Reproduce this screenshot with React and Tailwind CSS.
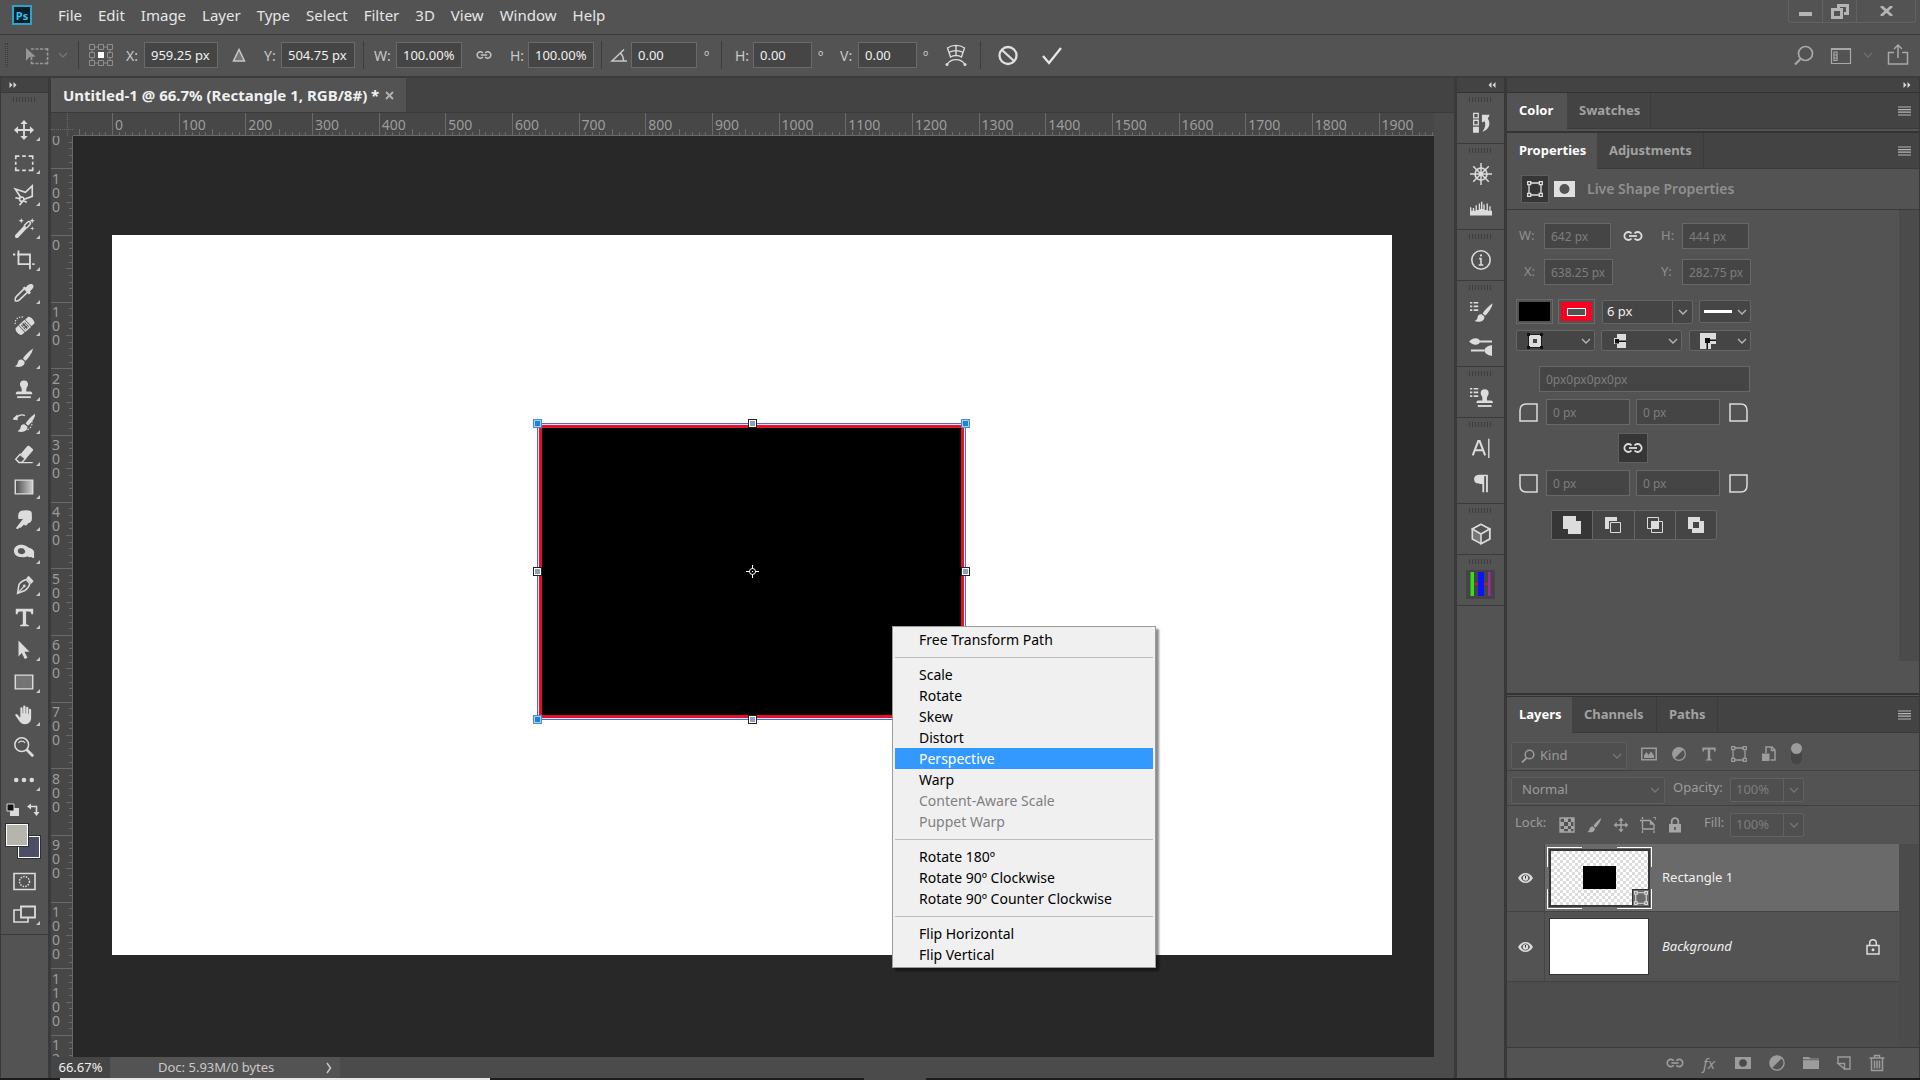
import React from "react";

const FONT = "font-['Noto_Sans','Open_Sans',sans-serif]";

/* ---------- icon helper ---------- */

function Ico({ size = "size-6", box = "0 0 24 24", className = "", children }) {
  return (
    <svg viewBox={box} className={`${size} shrink-0 ${className}`} fill="none" stroke="currentColor" strokeWidth="1.5" aria-hidden="true">
      {children}
    </svg>
  );
}

const fill = { fill: "currentColor", stroke: "none" };

const Chevron = ({ className = "" }) => (
  <Ico size="size-3" box="0 0 12 12" className={className}>
    <path d="M2 4l4 4 4-4" strokeWidth="1.3" />
  </Ico>
);

const LinkIcon = ({ className = "", size = "w-5 h-3" }) => (
  <Ico size={size} box="0 0 20 12" className={className}>
    <path d="M8.500 8.500A4 4 0 1 1 8.500 3.500M11.500 3.500A4 4 0 1 1 11.500 8.500" strokeWidth="1.8" />
    <path d="M6 6h8" strokeWidth="1.8" />
  </Ico>
);

const Burger = () => (
  <button type="button" aria-label="Panel menu" className="ml-auto mr-2 text-[#b5b5b5]">
    <Ico size="w-[13px] h-[10px]" box="0 0 13 10">
      <path d="M0 1h13M0 3.600h13M0 6.200h13M0 9h13" strokeWidth="1.200" />
    </Ico>
  </button>
);

const Arrows = ({ left }) => (
  <Ico size="w-[8px] h-[6px]" box="0 0 8 6" className="text-[#d6d6d6]">
    {left ? <path d="M3.500 0v6L.5 3zM7.500 0v6l-3-3z" {...fill} /> : <path d="M.5 0v6l3-3zM4.500 0v6l3-3z" {...fill} />}
  </Ico>
);

/* ---------- tool drawings ---------- */

const brushShape = (
  <g {...fill}>
    <path d="M22 1.500C17 4.500 13 9 10.800 12.600l2.800 2.600C17 12 20.500 7 22 1.500z" />
    <path d="M9.700 13.600c-2.700-.3-4 1.200-4.400 3.200-.3 1.700-1.300 3.300-3.300 4.200 3.600 1.600 8.300.9 10-1.800 1-1.700.8-2.800.3-3.600z" />
  </g>
);

const stampShape = (
  <g {...fill}>
    <path d="M12 1.500a4.400 4.400 0 0 1 4.400 4.400c0 2-1.900 3.100-1.900 5.600v2.200h4.300c1.700 0 2.200 1.300 2.200 2.800H3c0-1.500.5-2.800 2.200-2.800h4.300v-2.200c0-2.500-1.900-3.600-1.900-5.600A4.400 4.400 0 0 1 12 1.500z" />
    <path d="M4.500 18.800h15v2h-15z" />
  </g>
);

const handShape = (
  <path
    {...fill}
    d="M8 12V4.500a1.300 1.300 0 0 1 2.500 0V10h.6V2.800a1.300 1.300 0 0 1 2.600 0V10h.6V4a1.300 1.300 0 0 1 2.500 0v7h.6V6.500a1.200 1.200 0 0 1 2.400 0V15c0 4-2.400 7-6.600 7-3 0-4.800-1.200-6.200-3.300L2.600 12.600c-.5-1.600 1.300-2.300 2.300-1.100L8 15z"
  />
);

const TOOLS = [
  ["Move", <path {...fill} key="p" d="M12 1l4 4.500h-3V11h5.500V8L23 12l-4.500 4v-3H13v5.500h3L12 23l-4-4.500h3V13H5.500v3L1 12l4.500-4v3H11V5.500H8z" />],
  ["Rectangular Marquee", <path key="p" d="M3 8V4.500h4M10 4.500h4M17 4.500h4.500V8M21.500 10.500v3.500M21.500 16.500v3.500H17M14 20h-4M7 20H3v-3.500M3 14v-3.500" strokeWidth="1.800" />],
  ["Polygonal Lasso", <g key="p"><path d="M9 15.500L2.500 5.500 13.500 9 21 2v11.500L11.500 17" strokeWidth="1.800" /><circle cx="9.500" cy="16.500" r="2.300" strokeWidth="1.600" /><path d="M2.500 15l5 1M11 18.500L7 23M12 18.500l3 1.500" strokeWidth="1.800" /></g>],
  ["Magic Wand", <g key="p"><path {...fill} d="M2.500 19.500L12.500 9l3 3L5.500 22.500c-2 1.500-4.500-1-3-3z" /><path d="M12 9.500l4-4c2-1.500 4 .8 2.500 2.700L15 12" strokeWidth="1.700" /><path {...fill} d="M9 1l.8 2.200L12 4l-2.200.8L9 7l-.8-2.200L6 4l2.200-.8zM21 1l.8 2.200L24 4l-2.200.8L21 7l-.8-2.200L18 4l2.200-.8zM21 10l.6 1.900 1.900.6-1.900.6L21 15l-.6-1.900-1.900-.6 1.900-.6z" /></g>],
  ["Crop", <path key="p" d="M0 6h2.500M4.500 6h14v16M6 2v14.500h13M21 16.500h2.500M6 1.500V6" strokeWidth="2" />],
  ["Eyedropper", <g key="p"><path d="M12 7.500L3.500 16c-1 1-1.500 2.500-1 4.500 2 .5 3.500 0 4.500-1l9-8.500" strokeWidth="1.700" /><path {...fill} d="M10.500 6.500l2-1.500 1.300 1C15 4.500 17 2.500 19 2.200c2.500-.5 4.200 1.800 3 4-.8 1.500-2.500 2.800-3.500 4l1 1.500-2 2z" /></g>],
  ["Spot Healing Brush", <g key="p"><g transform="rotate(-42 13 13)"><path {...fill} d="M4.500 8H8v10H4.500C1 18 1 8 4.500 8zM18 8h4c3 0 3 10 0 10h-4z" /><path d="M9.500 8.500h7v9h-7z" strokeWidth="1.500" /><path d="M11.500 9v8M14.500 9v8" strokeWidth="1.300" strokeDasharray="2 1" /></g><path d="M2.500 11C1.500 6 6 2 11.500 3.500" strokeWidth="1.300" strokeDasharray="1.500 1.500" /></g>],
  ["Brush", brushShape],
  ["Clone Stamp", stampShape],
  ["History Brush", <g key="p"><g transform="translate(3 1)">{brushShape}</g><path {...fill} d="M-1 9L5 3.500V10z" /><path d="M3.500 7.500C6 4.500 10 3.500 13 5" strokeWidth="1.600" /><path d="M20.500 11c1 4-1 8-5 9.500" strokeWidth="1.300" strokeDasharray="1.500 1.800" /></g>],
  ["Eraser", <g key="p"><path {...fill} d="M8.500 10.500L15.500 2.500c.8-.8 1.500-.8 2.300-.2l3.500 3c.8.800.8 1.500.1 2.300L14 16z" /><path d="M7.800 11.300L3 16.500l3.500 3.700h3l4-4.200zM7 20.300h14.500" strokeWidth="1.600" /></g>],
  ["Gradient", <g key="p"><defs><linearGradient id="toolGrad"><stop offset="0" stopColor="#4a4a4a" /><stop offset="1" stopColor="#d0d0d0" /></linearGradient></defs><path d="M2.500 4.500h19v15h-19z" fill="url(#toolGrad)" strokeWidth="1.600" /></g>],
  ["Smudge", <path key="p" {...fill} d="M6 11c-1-4 0-8 3-9 4-1 8-.8 10.500.5 1.500.9 1 5 1.200 7.500 0 3-1.500 5-4.200 5.500-1.500 3-3.500 3-4.500 1.500L9 20c-.6 1-1.800 1-2 0l-1 1.300c-1 1.200-3 .2-2.300-1.200L11 10.500c-1.500.5-3.500.5-5 .5z" />],
  ["Sponge", <path key="p" {...fill} fillRule="evenodd" d="M1 10.500c0-3.500 3-6.500 8-6.500 4.500 0 6.500 2.500 9.500 3.700 2.500 1 4.500 2.300 4.500 4.300v6.500c-1.500.5-2.500-1.500-4-1-2 .8-2-.5-3.500-.5-2 .8-4 1-6.500.5C4 17 1 14.500 1 10.500zM7.500 8C4.500 9 4.500 13 7.500 14s5-.5 6-2c-.5-2-1.500-3.500-3-4-1-.3-2-.3-3 0z" />],
  ["Pen", <g key="p"><path d="M5 21l1.500-9.500C8 9 11.500 7 14.500 6l4 4.500c-1 3-3 6-5.500 7.500z" strokeWidth="1.700" /><path d="M5 21l6.500-7" strokeWidth="1.300" /><circle cx="12.300" cy="13" r="1.500" {...fill} /><path {...fill} d="M14.500 4.500L17 2l5.500 5.500-2.500 3z" /></g>],
  ["Type", <path key="p" {...fill} d="M3 3h19v6h-2c-.2-2.200-.8-3-3-3h-2.700v13c0 1.200.6 1.500 2.900 1.600V22H7.800v-1.400c2.300-.1 2.900-.4 2.900-1.600V6H8C5.800 6 5.200 6.800 5 9H3z" />],
  ["Path Selection", <path key="p" {...fill} d="M6 1.500l12 12.500h-5.500l3.300 6.500-3 1.400-3.200-6.700L6 19z" />],
  ["Rectangle", <path key="p" d="M2.500 4.500h19v15h-19z" fill="#747474" strokeWidth="1.600" />],
  ["Hand", handShape],
  ["Zoom", <g key="p"><circle cx="9.500" cy="9.500" r="7.500" strokeWidth="1.700" /><path d="M6 7.500C7.500 5 11.500 5 13 7.500" strokeWidth="1.300" /><path d="M15 15l7 7" strokeWidth="3" /></g>],
  ["Edit Toolbar", <g key="p" {...fill}><circle cx="3.500" cy="12" r="2.500" /><circle cx="12" cy="12" r="2.500" /><circle cx="20.500" cy="12" r="2.500" /></g>],
];

const Corner = () => <span className="absolute right-2 bottom-[5px] border-l-4 border-b-4 border-l-transparent border-b-[#c8c8c8]" />;

function Grip({ className = "" }) {
  return (
    <svg viewBox="0 0 24 5" className={`w-6 h-[5px] text-[#3d3d3d] ${className}`} stroke="currentColor" aria-hidden="true">
      <path d="M.5 0v5M3.500 0v5M6.500 0v5M9.500 0v5M12.500 0v5M15.500 0v5M18.500 0v5M21.500 0v5" />
    </svg>
  );
}

function Toolbar() {
  return (
    <nav aria-label="Tools" className="flex w-12 shrink-0 flex-col border-l border-[#3a3a3a] bg-[#535353] text-[#dcdcdc]">
      <div className="flex h-[15px] items-center border-b border-[#3a3a3a] bg-[#434343] pl-2">
        <Arrows />
      </div>
      <div className="flex h-[21px] shrink-0 justify-center pt-1">
        <Grip />
      </div>
      <div className="flex h-[682px] shrink-0 flex-col">
        {TOOLS.map(([name, art]) => (
          <button key={name} type="button" aria-label={name} className="relative flex w-full flex-1 items-center pl-3">
            <Ico size="size-[22px]">{art}</Ico>
            {name !== "Zoom" && <Corner />}
          </button>
        ))}
      </div>
      <div className="flex h-[27px] items-center justify-between pr-2 pl-[5px]">
        <button type="button" aria-label="Default colors">
          <Ico size="size-[13px]" box="0 0 13 13">
            <path d="M5 5h8v8H4V9" {...fill} />
            <path d="M1 1h7v7H1z" fill="#111" strokeWidth="1" />
          </Ico>
        </button>
        <button type="button" aria-label="Swap colors">
          <Ico size="size-[13px]" box="0 0 13 13">
            <path d="M3 3.500h6.500V10" strokeWidth="1.600" />
            <path d="M4 .5v6l-4-3zM6.500 9h6l-3 4z" {...fill} />
          </Ico>
        </button>
      </div>
      <div className="ml-1 grid h-9 w-[36px]">
        <button type="button" aria-label="Background color" className="col-start-1 row-start-1 size-6 self-end justify-self-end border border-[#2f2f2f] bg-[#4b4e66] outline outline-1 -outline-offset-2 outline-white" />
        <button type="button" aria-label="Foreground color" className="col-start-1 row-start-1 size-6 self-start border border-[#2f2f2f] bg-[#b5b5ad] outline outline-1 -outline-offset-2 outline-white" />
      </div>
      <button type="button" aria-label="Quick mask" className="mt-[7px] flex h-8 items-center pl-3">
        <Ico>
          <path d="M1 3.500h21v16H1z" strokeWidth="1.600" />
          <circle cx="11.500" cy="11.500" r="5" strokeDasharray="1.500 1.200" />
        </Ico>
      </button>
      <button type="button" aria-label="Screen mode" className="relative flex h-8 items-center pl-3">
        <Ico>
          <path d="M7 8H1v12h14v-4" strokeWidth="1.600" />
          <path d="M8 4.500h14v11H8z" strokeWidth="1.800" />
        </Ico>
        <Corner />
      </button>
      <div className="mt-1 border-t border-[#3a3a3a]" />
    </nav>
  );
}

/* ---------- top bars ---------- */

const MENUS = ["File", "Edit", "Image", "Layer", "Type", "Select", "Filter", "3D", "View", "Window", "Help"];

function MenuBar() {
  return (
    <header className="flex h-[34px] shrink-0 items-start">
      <div className="ml-3 mt-[5px] flex h-5 w-5 items-center justify-center border-2 border-[#2fa3c7] bg-[#071f2b] text-[11px] leading-none font-bold text-[#31c5f0]">Ps</div>
      <nav aria-label="Main" className="ml-[18px] flex h-[31px] items-center text-[15px] text-[#e6e6e6]">
        {MENUS.map((m) => (
          <button key={m} type="button" className="px-2">
            {m}
          </button>
        ))}
      </nav>
      <div className="ml-auto mr-1 flex h-[23px] rounded-b border border-t-0 border-[#626262] text-[#b4b4b4]">
        <button type="button" aria-label="Minimize" className="flex w-[34px] justify-center border-r border-[#626262]">
          <Ico size="w-[13px] h-[17px]" box="0 0 13 17">
            <path d="M0 14h13" strokeWidth="4" />
          </Ico>
        </button>
        <button type="button" aria-label="Restore" className="flex w-[34px] justify-center border-r border-[#626262] pt-1">
          <Ico size="w-[18px] h-[15px]" box="0 0 18 15">
            <path d="M7.500 4V1.500h9v8H13" strokeWidth="3" />
            <path d="M1.500 5.500h9v8h-9z" strokeWidth="3" />
          </Ico>
        </button>
        <button type="button" aria-label="Close" className="flex w-[58px] justify-center pt-[6px]">
          <Ico size="w-[13px] h-[10px]" box="0 0 13 10">
            <path d="M1 0l11 10M12 0L1 10" strokeWidth="2.800" />
          </Ico>
        </button>
      </div>
    </header>
  );
}

const Divider = ({ className = "" }) => <span className={`h-7 w-px shrink-0 bg-[#3c3c3c] ${className}`} />;

function OptField({ label, name, value, labelClass, inputClass }) {
  return (
    <label className="flex shrink-0 items-center">
      <span className={labelClass}>{label}</span>
      <input aria-label={name} defaultValue={value} className={`h-[26px] border border-[#6a6a6a] bg-[#454545] pl-[6px] text-[13px] text-[#f0f0f0] ${inputClass}`} />
    </label>
  );
}

function OptionsBar() {
  return (
    <div className="flex h-[44px] shrink-0 items-center border-t border-b-2 border-[#3c3c3c] pb-px text-[14px] text-[#c8c8c8]">
      <span className="ml-[5px] h-6 w-[3px] border-x border-dotted border-[#3a3a3a]" />
      <Ico className="ml-[17px] text-[#979797]">
        <path d="M6 6h17M6 20.500h17M6.500 14v7M22.500 5v17" strokeWidth="1.700" strokeDasharray="3 1.500" />
        <path d="M1 5v13l3.500-4 6-.5z" {...fill} />
      </Ico>
      <Chevron className="ml-2 text-[#747474]" />
      <Divider className="ml-[9px]" />
      <Ico size="size-[26px]" box="0 0 26 26" className="ml-[9px] text-[#8e8e8e]">
        <path d="M1.500 2.500h5v5h-5zM10.500 2.500h5v5h-5zM19.500 2.500h5v5h-5zM1.500 10.500h5v5h-5zM19.500 10.500h5v5h-5zM1.500 18.500h5v5h-5zM10.500 18.500h5v5h-5zM19.500 18.500h5v5h-5zM6.500 5h4M15.500 5h4M6.500 21h4M15.500 21h4M4 7.500v3M22 7.500v3M4 15.500v3M22 15.500v3" strokeWidth="1" />
        <path d="M10 10h6v6h-6z" fill="#fff" stroke="none" />
      </Ico>
      <OptField label="X:" name="X" value="959.25 px" labelClass="ml-3 w-[18px]" inputClass="w-[74px]" />
      <Ico size="size-[18px]" box="0 0 18 18" className="ml-3">
        <path d="M9 3.500L14.500 15h-11z" fill="#777" strokeWidth="1.500" />
      </Ico>
      <OptField label="Y:" name="Y" value="504.75 px" labelClass="ml-4 w-[17px]" inputClass="w-[74px]" />
      <Divider className="ml-2" />
      <OptField label="W:" name="Width" value="100.00%" labelClass="ml-[10px] w-[22px]" inputClass="w-[66px]" />
      <LinkIcon className="ml-[14px]" size="w-4 h-3" />
      <OptField label="H:" name="Height" value="100.00%" labelClass="ml-[18px] w-[18px]" inputClass="w-[66px]" />
      <Divider className="ml-[7px]" />
      <Ico size="size-[18px]" box="0 0 18 18" className="ml-2">
        <path d="M14 3.500L2 15h15M10.500 7c2 2 3 4.500 3 8" strokeWidth="1.500" />
      </Ico>
      <OptField label="" name="Rotation" value="0.00" labelClass="ml-[3px]" inputClass="w-[66px]" />
      <span className="ml-[7px] w-2">º</span>
      <Divider className="ml-[9px]" />
      <OptField label="H:" name="Horizontal skew" value="0.00" labelClass="ml-[13px] w-[18px]" inputClass="w-[59px]" />
      <span className="ml-[6px] w-2">º</span>
      <OptField label="V:" name="Vertical skew" value="0.00" labelClass="ml-[14px] w-[18px]" inputClass="w-[59px]" />
      <span className="ml-[6px] w-2">º</span>
      <button type="button" aria-label="Warp mode" className="ml-[13px]">
        <Ico className="text-[#dcdcdc]">
          <path d="M3.500 5C8 1.500 16 1.500 20.500 5L17.500 14c-3-2-8-2-11 0zM12 2.500V12.500M5 9.500c4-2.500 10-2.500 14 0" strokeWidth="1.400" />
          <path d="M3 21.500c4-6.500 14-6.500 18 0" strokeWidth="1.400" />
          <circle cx="3" cy="21.500" r="1.500" {...fill} />
          <circle cx="21" cy="21.500" r="1.500" {...fill} />
        </Ico>
      </button>
      <Divider className="ml-3" />
      <button type="button" aria-label="Cancel transform" className="ml-4 text-[#e0e0e0]">
        <Ico size="size-[22px]" box="0 0 22 22">
          <circle cx="11" cy="11.500" r="8.500" strokeWidth="2.300" />
          <path d="M5 6L17 17" strokeWidth="2.300" />
        </Ico>
      </button>
      <button type="button" aria-label="Commit transform" className="ml-[22px] text-[#e8e8e8]">
        <Ico size="size-[22px]" box="0 0 22 22">
          <path d="M2 12l6 7L20 4" strokeWidth="2.200" />
        </Ico>
      </button>
      <button type="button" aria-label="Search" className="ml-auto text-[#a8a8a8]">
        <Ico size="size-[22px]" box="0 0 22 22">
          <circle cx="12.500" cy="9.500" r="7" strokeWidth="1.700" />
          <path d="M7.500 15L2 20.500" strokeWidth="2.200" />
        </Ico>
      </button>
      <button type="button" aria-label="Workspace" className="ml-[14px] flex items-center text-[#a8a8a8]">
        <Ico>
          <path d="M2.500 5.500h19v15h-19zM5 9h3v8.500H5zM5 12h3M5 15h3" strokeWidth="1.200" />
          <path d="M2 6h20" strokeWidth="2" />
        </Ico>
        <Chevron className="ml-[9px] text-[#6e6e6e]" />
      </button>
      <button type="button" aria-label="Share" className="ml-3 mr-[10px] text-[#a8a8a8]">
        <Ico>
          <path d="M8 9.500H2.500v11.500h19V9.500H16M12 15V2.500M8 6L12 2l4 4" strokeWidth="1.500" />
        </Ico>
      </button>
    </div>
  );
}

/* ---------- document area ---------- */

const STEP = 200 / 3;

function ticks(start, end, origin, draw) {
  const out = [];
  for (let i = Math.ceil(((start - origin) * 10) / STEP); origin + (i * STEP) / 10 <= end; i++) {
    const len = i % 10 === 0 ? "major" : i % 5 === 0 ? "mid" : "minor";
    out.push(draw(Math.round(origin + (i * STEP) / 10) + 0.5, len));
  }
  return out.join("");
}

const H_LEN = { major: 22, mid: 6, minor: 3 };
const H_TICKS = ticks(0, 1361, 39, (p, k) => `M${p} ${22 - H_LEN[k]}V22`);
const V_TICKS = ticks(0, 921, 99, (p, k) => `M${21 - H_LEN[k]} ${p}H21`);
const H_LABELS = Array.from({ length: 20 }, (_, i) => i * 100);
const V_LABELS = [200, 100, 0, 100, 200, 300, 400, 500, 600, 700, 800, 900, 1000, 1100, 1200];

function TopRuler() {
  return (
    <div className="flex h-[23px] shrink-0 bg-[#474747] text-[14px] leading-[22px] text-[#9c9c9c]">
      <div className="relative w-[22px] shrink-0">
        <span className="absolute inset-y-0 left-4 border-l border-dotted border-[#6a6a6a]" />
        <span className="absolute inset-x-0 top-4 border-t border-dotted border-[#6a6a6a]" />
      </div>
      <div className="grid flex-1 overflow-hidden border-b border-[#6a6a6a]">
        <svg className="col-start-1 row-start-1 h-[22px] w-full text-[#6a6a6a]" stroke="currentColor" aria-hidden="true">
          <path d={H_TICKS} />
        </svg>
        <div className="col-start-1 row-start-1 flex w-0 pt-px pl-[42px]">
          {H_LABELS.map((n) => (
            <span key={n} className="shrink-0" style={{ width: STEP }}>
              {n}
            </span>
          ))}
        </div>
      </div>
      <div className="w-5 shrink-0 bg-[#4b4b4b]" />
    </div>
  );
}

function SideRuler() {
  return (
    <div className="grid w-[22px] shrink-0 overflow-hidden border-r border-[#6a6a6a] bg-[#474747] text-[14px] leading-[14px] text-[#9c9c9c]">
      <svg className="col-start-1 row-start-1 h-full w-[21px] text-[#6a6a6a]" stroke="currentColor" aria-hidden="true">
        <path d={V_TICKS} />
      </svg>
      <div className="col-start-1 row-start-1 -mt-[31px] flex h-0 w-[10px] flex-col">
        {V_LABELS.map((n, i) => (
          <span key={i} className="shrink-0 pl-px break-all" style={{ height: STEP }}>
            {n}
          </span>
        ))}
      </div>
    </div>
  );
}

const MENU = [
  ["Free Transform Path"],
  ["Scale", "Rotate", "Skew", "Distort", "Perspective", "Warp", "Content-Aware Scale", "Puppet Warp"],
  ["Rotate 180º", "Rotate 90º Clockwise", "Rotate 90º Counter Clockwise"],
  ["Flip Horizontal", "Flip Vertical"],
];
const DISABLED = ["Content-Aware Scale", "Puppet Warp"];

function ContextMenu() {
  return (
    <div role="menu" className="absolute top-[490px] left-[819px] w-[264px] border border-[#9b9b9b] bg-[#f0f0f0] p-[2px] text-[14px] text-black shadow-[3px_3px_2px_rgba(0,0,0,0.45)]">
      {MENU.map((group, i) => (
        <div key={i} className={i ? "mt-[7px] border-t border-[#bdbdbd] pt-[6px]" : ""}>
          {group.map((item) => (
            <button
              key={item}
              type="button"
              role="menuitem"
              disabled={DISABLED.includes(item)}
              className={`block h-[21px] w-full pl-6 text-left leading-[21px] disabled:text-[#808080] ${item === "Perspective" ? "bg-[#3399ff] text-white" : ""}`}
            >
              {item}
            </button>
          ))}
        </div>
      ))}
    </div>
  );
}

function Artboard() {
  const mids = [[640.5, 188.5], [640.5, 484.5], [425.5, 336.5], [853.5, 336.5]];
  const corners = [[425.5, 188.5], [853.5, 188.5], [425.5, 484.5], [853.5, 484.5]];
  return (
    <svg viewBox="0 0 1280 720" className="h-[720px] w-[1280px] shrink-0 bg-white" aria-label="Rectangle being transformed">
      <path d="M425 188h429v297H425z" fill="#e6e4f4" />
      <path d="M427 190h425v293H427z" fill="#e4102c" />
      <path d="M430 193h419v287H430z" fill="#000" />
      <path d="M425.500 188.500h428v296h-428z" fill="none" stroke="#4a72b4" />
      {mids.map(([x, y]) => (
        <g key={`${x}-${y}`}>
          <rect x={x - 4} y={y - 4} width="8" height="8" fill="#222" stroke="#222" />
          <rect x={x - 3} y={y - 3} width="6" height="6" fill="#8fa0b8" stroke="#fff" />
        </g>
      ))}
      {corners.map(([x, y]) => (
        <g key={`${x}-${y}`}>
          <rect x={x - 4} y={y - 4} width="8" height="8" fill="#1c86d2" stroke="#4a8cc8" />
          <rect x={x - 3} y={y - 3} width="6" height="6" fill="none" stroke="#a8cdea" />
        </g>
      ))}
      <g stroke="#fff" fill="none">
        <circle cx="640.500" cy="336.500" r="3" />
        <path d="M640.500 330v4M640.500 339v4M634 336.500h4M643 336.500h4M640 336.500h1" />
      </g>
    </svg>
  );
}

function Document() {
  return (
    <main className="flex min-w-0 flex-1 flex-col border-x-[3px] border-[#3a3a3a] bg-[#434343]">
      <div className="flex h-[35px] shrink-0 border-b border-[#3a3a3a]">
        <div className="flex items-center bg-[#535353] px-3 text-[15px] font-bold text-[#f0f0f0]">
          <span className="whitespace-nowrap">Untitled-1 @ 66.7% (Rectangle 1, RGB/8#) *</span>
          <button type="button" aria-label="Close document" className="ml-[6px] text-[#b0b0b0]">
            <Ico size="size-[9px]" box="0 0 9 9">
              <path d="M1 1l7 7M8 1L1 8" strokeWidth="2" />
            </Ico>
          </button>
        </div>
      </div>
      <TopRuler />
      <div className="flex min-h-0 flex-1">
        <SideRuler />
        <div className="relative min-w-0 flex-1 bg-[#282828]">
          <div className="h-full overflow-hidden pt-[99px] pl-[39px]">
            <Artboard />
          </div>
          <ContextMenu />
        </div>
        <div className="w-5 shrink-0 bg-[#4b4b4b]" />
      </div>
      <div className="flex h-[21px] shrink-0 items-center bg-[#4b4b4b] text-[13px]">
        <span className="flex h-full w-[59px] items-center justify-center bg-[#454545] text-[#f0f0f0]">66.67%</span>
        <button type="button" className="flex h-full w-[230px] items-center justify-between bg-[#535353] pr-2 pl-12 text-[13px] text-[#c8c8c8]">
          Doc: 5.93M/0 bytes
          <Ico size="w-[6px] h-3" box="0 0 6 12">
            <path d="M1 1l3.500 5L1 11" />
          </Ico>
        </button>
      </div>
    </main>
  );
}

/* ---------- collapsed icon dock ---------- */

const bullets = <path d="M0 3h2.500M4 3h5M0 7h2.500M4 7h5M0 11h2.500M4 11h5" strokeWidth="1.800" />;

const DOCK = [
  [["History", <g key="g"><path d="M4 1.500h5v5H4zM4 9h5v5H4z" strokeWidth="1.400" /><path {...fill} d="M3.300 16h6.400v6.500H3.300zM13 3h8.500L19.500 7c3.500 6 1.500 12-6 14.500 3-4 4-8 2.500-11.500l-3 1.500z" /></g>]],
  [
    ["Navigator", <g key="g"><circle cx="12" cy="12" r="6.500" strokeWidth="1.800" /><circle cx="12" cy="12" r="2.500" {...fill} /><path d="M12 0v24M0 12h24M3.500 3.500l17 17M20.500 3.500l-17 17" strokeWidth="1.600" /></g>],
    ["Histogram", <path key="g" {...fill} d="M0 19V10h1.500v4H3V11h1.500v3H6V8h1.500v5h2V6H11v6h1V4h1.500v8h1V7H16v6h2V6h1.500v8H21V9h1.500v5H24v5z" />],
  ],
  [["Info", <g key="g"><circle cx="12" cy="12" r="10" strokeWidth="1.700" /><path d="M12 10v8M10 10.500h2.500M9.500 17.500h5" strokeWidth="1.700" /><circle cx="12" cy="7" r="1.200" {...fill} /></g>]],
  [
    ["Brush Settings", <g key="g">{bullets}<g transform="translate(3 2)">{brushShape}</g></g>],
    ["Brushes", <g key="g"><path {...fill} d="M-1 7c2-2 4-3.500 7-3.500S11 5 11 7s-2 3.500-5 3.500S1 9 -1 7zM24 11v12c-5-1-8-3-8-6s3-5 8-6z" /><path d="M11 7h13M1 17h15" strokeWidth="2.200" /></g>],
  ],
  [["Clone Source", <g key="g">{bullets}<g transform="translate(4 2)">{stampShape}</g></g>]],
  [
    ["Character", <g key="g"><path d="M3 20L9 4.500h1.500L16.500 20M5.500 14.500H14" strokeWidth="2.200" /><path d="M20.500 2v21" strokeWidth="1.500" /></g>],
    ["Paragraph", <path key="g" {...fill} d="M19.500 3v19h-2V4.500h-2V22h-2v-9C8 13.500 4.500 12 4.500 8S7.500 3 11 3z" />],
  ],
  [["3D", <g key="g"><path d="M12 1.500l9.500 5v11L12 22.500l-9.500-5v-11z" fill="#777" strokeWidth="1.700" /><path d="M12 12v10.500l9.500-5v-11zM12 1.500l9.500 5L12 12 2.500 6.500z" fill="#535353" strokeWidth="1.700" /></g>]],
];

function Dock() {
  return (
    <aside className="flex w-[47px] shrink-0 flex-col bg-[#535353] text-[#dcdcdc]">
      <div className="flex h-[15px] shrink-0 items-center justify-end border-b border-[#333] bg-[#434343] pr-2">
        <Arrows left />
      </div>
      {DOCK.map((group, i) => (
        <div key={i} className="flex flex-col items-center border-b border-[#3a3a3a] pt-1 pb-[3px]">
          <Grip className="mb-[3px]" />
          {group.map(([name, art]) => (
            <button key={name} type="button" aria-label={name} className="flex h-[35px] w-full items-center justify-center">
              <Ico size="size-[22px]" className="overflow-visible">
                {art}
              </Ico>
            </button>
          ))}
        </div>
      ))}
      <div className="flex flex-col items-center border-b border-[#3a3a3a] pt-1 pb-[3px]">
        <Grip className="mb-[3px]" />
        <button type="button" aria-label="Extension" className="flex h-[35px] items-center">
          <svg viewBox="0 0 29 29" className="size-[29px] bg-[#444]" aria-hidden="true">
            <path d="M4.500 2h3.500v24H4.500z" fill="#2ee01e" />
            <path d="M12 2h6v24h-6z" fill="#0a14f5" />
            <path d="M22 2h2.500v24H22z" fill="#9c2fa0" />
            <path d="M8 14h4M18 14h4" stroke="#c01c2a" strokeWidth="2" />
          </svg>
        </button>
      </div>
    </aside>
  );
}

/* ---------- right panels ---------- */

function Tabs({ items }) {
  return (
    <div className="flex h-[36px] shrink-0 items-stretch bg-[#434343] text-[13px] font-bold">
      {items.map(([name, width], i) => (
        <button key={name} type="button" className={`${width} pl-3 text-left ${i ? "border-r border-b border-[#3a3a3a] text-[#a2a2a2]" : "bg-[#535353] text-white"}`}>
          {name}
        </button>
      ))}
      <div className="flex flex-1 items-center border-b border-[#3a3a3a]">
        <Burger />
      </div>
    </div>
  );
}

const ShapeBox = ({ size = "size-4", className = "" }) => (
  <Ico size={size} box="0 0 16 16" className={className}>
    <path d="M3.500 2h9M3.500 14h9M2 3.500v9M14 3.500v9" strokeWidth="1.300" />
    <path d="M.7.7h3v3h-3zM12.300.7h3v3h-3zM.7 12.300h3v3h-3zM12.300 12.300h3v3h-3z" strokeWidth="1.300" />
  </Ico>
);

const dimInput = "h-[26px] border border-[#686868] bg-[#454545] pl-[6px] text-[12px] text-[#7d7d7d]";

function PropField({ label, name, value, labelClass, inputClass }) {
  return (
    <label className="flex items-center">
      <span className={`text-[13px] text-[#8f8f8f] ${labelClass}`}>{label}</span>
      <input aria-label={name} disabled defaultValue={value} className={`${dimInput} ${inputClass}`} />
    </label>
  );
}

const cornerPaths = {
  tl: "M7.500 1H18v17H1V7.500C1 3.500 3.500 1 7.500 1z",
  tr: "M11.500 1H1v17h17V7.500C18 3.500 15.500 1 11.500 1z",
  bl: "M7.500 18H18V1H1v10.500c0 4 2.500 6.500 6.500 6.500z",
  br: "M11.500 18H1V1h17v10.500c0 4-2.500 6.500-6.500 6.500z",
};

function CornerRow({ left, right }) {
  return (
    <div className="flex items-center">
      <Ico size="size-[19px]" box="0 0 19 19" className="ml-3 text-[#dcdcdc]">
        <path d={cornerPaths[left]} />
      </Ico>
      <input aria-label={`${left} radius`} disabled defaultValue="0 px" className={`${dimInput} ml-2 w-[84px]`} />
      <input aria-label={`${right} radius`} disabled defaultValue="0 px" className={`${dimInput} ml-[6px] w-[84px]`} />
      <Ico size="size-[19px]" box="0 0 19 19" className="ml-[9px] text-[#dcdcdc]">
        <path d={cornerPaths[right]} />
      </Ico>
    </div>
  );
}

function StrokeButton({ name, className, children }) {
  return (
    <button type="button" aria-label={name} aria-haspopup="menu" className={`flex items-center justify-between rounded-[2px] border border-[#666] bg-[#454545] pr-[2px] text-[#b8b8b8] ${className}`}>
      {children}
      <Chevron />
    </button>
  );
}

function Properties() {
  return (
    <section className="flex h-[562px] shrink-0 flex-col border-b-2 border-[#333]">
      <Tabs items={[["Properties", "w-[90px]"], ["Adjustments", "w-[107px]"]]} />
      <div className="flex h-[41px] shrink-0 items-center border-b border-[#3a3a3a] pb-px pl-[14px]">
        <button type="button" aria-label="Shape properties" className="flex size-7 items-center justify-center border border-[#5f5f5f] bg-[#363636] text-[#e0e0e0]">
          <ShapeBox />
        </button>
        <Ico size="w-[21px] h-4" box="0 0 21 16" className="ml-[5px]">
          <path d="M0 0h21v16H0z" fill="#e0e0e0" stroke="none" />
          <circle cx="10.500" cy="8" r="5" fill="#535353" stroke="none" />
        </Ico>
        <h2 className="ml-3 text-[14px] font-semibold text-[#8f8f8f]">Live Shape Properties</h2>
      </div>
      <div className="flex">
        <div className="flex-1 pt-[13px]">
          <div className="flex items-center">
            <PropField label="W:" name="Shape width" value="642 px" labelClass="w-[37px] pl-3" inputClass="w-[67px]" />
            <LinkIcon className="ml-[12px] text-[#dcdcdc]" />
            <PropField label="H:" name="Shape height" value="444 px" labelClass="ml-[18px] w-[21px]" inputClass="w-[67px]" />
          </div>
          <div className="mt-[10px] flex items-center">
            <PropField label="X:" name="Shape X" value="638.25 px" labelClass="w-[37px] pl-[17px]" inputClass="w-[69px]" />
            <PropField label="Y:" name="Shape Y" value="282.75 px" labelClass="ml-12 w-[21px]" inputClass="w-[69px]" />
          </div>
          <div className="mt-[14px] flex items-center pl-[9px]">
            <button type="button" aria-label="Fill color" className="h-[25px] w-[37px] border border-[#6a6a6a] bg-[#535353] p-[2px]">
              <span className="block h-full bg-black" />
            </button>
            <button type="button" aria-label="Stroke color" className="ml-[5px] h-[25px] w-[37px] border border-[#6a6a6a] p-[2px]">
              <span className="flex h-full items-center justify-center bg-[#fb0020]">
                <span className="h-[8px] w-[19px] border border-white bg-[#535353]" />
              </span>
            </button>
            <div className="ml-[7px] flex h-6 w-[91px] rounded-[2px] border border-[#666] bg-[#454545]">
              <input aria-label="Stroke width" defaultValue="6 px" className="w-[70px] border-r border-[#666] pl-1 text-[13px] text-[#f0f0f0]" />
              <button type="button" aria-label="Stroke width presets" className="flex flex-1 items-center justify-center text-[#b8b8b8]">
                <Chevron />
              </button>
            </div>
            <StrokeButton name="Stroke type" className="ml-[6px] h-[23px] w-[52px] pl-1">
              <span className="h-[3px] w-7 bg-white" />
            </StrokeButton>
          </div>
          <div className="mt-[6px] flex pl-[9px]">
            <StrokeButton name="Stroke alignment" className="h-[21px] w-[79px] pl-[10px]">
              <Ico size="size-4" box="0 0 16 16">
                <path d="M1.500 1.500h13v13h-13z" stroke="#1a1a1a" fill="#dcdcdc" strokeWidth="1" />
                <path d="M0 0h3v3H0zM13 0h3v3h-3zM0 13h3v3H0zM13 13h3v3h-3z" fill="#111" stroke="none" />
                <path d="M6 6h4v4H6z" fill="#454545" stroke="none" />
              </Ico>
            </StrokeButton>
            <StrokeButton name="Stroke caps" className="ml-[6px] h-[21px] w-[81px] pl-3">
              <Ico size="w-3 h-4" box="0 0 12 16">
                <path d="M3 1h9v14H3v-4H0V5h3z" fill="#dcdcdc" stroke="none" />
                <path d="M1 6h4v1.500h7v1.500H5v1.500H1z" fill="#111" stroke="none" />
              </Ico>
            </StrokeButton>
            <StrokeButton name="Stroke corners" className="ml-[7px] h-[21px] w-[62px] pl-[10px]">
              <Ico size="size-4" box="0 0 16 16">
                <path d="M0 0h16v11h-5v5H0z" fill="#dcdcdc" stroke="none" />
                <path d="M5 5h5v1.500h6V8h-6v2H8v6H6.500v-6H5z" fill="#111" stroke="none" />
              </Ico>
            </StrokeButton>
          </div>
          <input aria-label="Corner radii" disabled defaultValue="0px0px0px0px" className={`${dimInput} mt-[15px] ml-8 block w-[211px]`} />
          <div className="mt-[7px]">
            <CornerRow left="tl" right="tr" />
          </div>
          <button type="button" aria-label="Link corner radii" className="mt-[8px] ml-[111px] flex h-[30px] w-[30px] items-center justify-center border border-[#5f5f5f] bg-[#363636] text-[#dcdcdc]">
            <LinkIcon />
          </button>
          <div className="mt-[7px]">
            <CornerRow left="bl" right="br" />
          </div>
          <div className="mt-[14px] ml-11 flex h-[30px] w-[166px] divide-x divide-[#666] rounded-[2px] border border-[#666] bg-[#454545] text-[#dcdcdc]">
            <button type="button" aria-label="Combine shapes" className="flex flex-1 items-center justify-center bg-[#363636]">
              <Ico size="size-[18px]" box="0 0 18 18">
                <path d="M0 0h13v5h5v13H5v-5H0z" {...fill} />
              </Ico>
            </button>
            <button type="button" aria-label="Subtract front shape" className="flex flex-1 items-center justify-center">
              <Ico size="size-4" box="0 0 16 16">
                <path d="M0 0h12v4H4v8H0z" {...fill} />
                <path d="M5.500 5.500h10v10h-10z" strokeWidth="1" />
              </Ico>
            </button>
            <button type="button" aria-label="Intersect shape areas" className="flex flex-1 items-center justify-center">
              <Ico size="size-4" box="0 0 16 16">
                <path d="M.5.5h11v11H.5zM4.500 4.500h11v11h-11z" strokeWidth="1" />
                <path d="M4 4h8v8H4z" {...fill} />
              </Ico>
            </button>
            <button type="button" aria-label="Exclude overlapping shapes" className="flex flex-1 items-center justify-center">
              <Ico size="size-4" box="0 0 16 16">
                <path fillRule="evenodd" d="M0 0h12v4h4v12H4v-4H0zM5 5v6h6V5z" {...fill} />
              </Ico>
            </button>
          </div>
        </div>
        <div className="h-[451px] w-[20px] shrink-0 bg-[#4b4b4b]" />
      </div>
    </section>
  );
}

const contrast = (
  <g>
    <circle cx="8" cy="8" r="6.300" strokeWidth="1.200" />
    <path d="M12.500 3.500A6.300 6.300 0 1 1 3.500 12.500z" {...fill} transform="rotate(180 8 8)" />
  </g>
);

const brush16 = <g transform="scale(.7)">{brushShape}</g>;

function Percent({ name, className = "" }) {
  return (
    <div className={`flex h-6 w-[74px] rounded-[2px] border border-[#616161] bg-[#4f4f4f] ${className}`}>
      <input aria-label={name} disabled defaultValue="100%" className="w-[53px] border-r border-[#616161] pl-[5px] text-[13px] text-[#7d7d7d]" />
      <button type="button" aria-label={`${name} slider`} className="flex flex-1 items-center justify-center text-[#767676]">
        <Chevron />
      </button>
    </div>
  );
}

const Eye = () => (
  <Ico size="w-[15px] h-[10px]" box="0 0 15 10" className="text-[#dcdcdc]">
    <path fillRule="evenodd" d="M0 5C2 1.800 4.500 0 7.500 0S13 1.800 15 5c-2 3.200-4.500 5-7.500 5S2 8.200 0 5zm3 0c1 2.300 2.500 3.500 4.500 3.500S11 7.300 12 5c-1-2.300-2.500-3.500-4.500-3.500S4 2.700 3 5z" {...fill} />
    <circle cx="7.500" cy="5" r="2.700" {...fill} />
    <path d="M7.500 3v2.500" stroke="#333" strokeWidth="1" />
  </Ico>
);

function Layers() {
  return (
    <section className="mt-px flex min-h-0 flex-1 flex-col border-t border-[#333]">
      <Tabs items={[["Layers", "w-[65px]"], ["Channels", "w-[85px]"], ["Paths", "w-[61px]"]]} />
      <div className="flex h-[38px] shrink-0 items-center border-b border-[#404040] pl-1 text-[#9c9c9c]">
        <div className="mt-2 grid h-[27px] w-[116px] items-center rounded-[2px] border border-[#5e5e5e] bg-[#4f4f4f]">
          <select aria-label="Filter kind" className="col-start-1 row-start-1 h-full w-full appearance-none pl-7 text-[13px]">
            <option>Kind</option>
          </select>
          <Ico size="size-[14px]" box="0 0 14 14" className="pointer-events-none col-start-1 row-start-1 ml-[9px]">
            <circle cx="8.500" cy="5.500" r="4.300" />
            <path d="M5.500 9L1 13.500" strokeWidth="1.800" />
          </Ico>
          <Chevron className="pointer-events-none col-start-1 row-start-1 mr-[3px] justify-self-end text-[#767676]" />
        </div>
        <div className="ml-[14px] flex items-center gap-[14px] pt-1">
          <button type="button" aria-label="Pixel layers">
            <Ico size="size-4" box="0 0 16 16">
              <path d="M.8 2.200h14.400v11.600H.8z" />
              <path d="M3 12V9.500L5.500 6l2 3 2.500-3.500 3 4V12z" {...fill} />
            </Ico>
          </button>
          <button type="button" aria-label="Adjustment layers">
            <Ico size="size-4" box="0 0 16 16">{contrast}</Ico>
          </button>
          <button type="button" aria-label="Type layers">
            <Ico size="size-4" box="1 1 23 23">{TOOLS[15][1]}</Ico>
          </button>
          <button type="button" aria-label="Shape layers">
            <ShapeBox />
          </button>
          <button type="button" aria-label="Smart objects">
            <Ico size="size-4" box="0 0 16 16">
              <path d="M5 7V1h6l3 3v10H9.500M10.500 1v3.500H14" />
              <path d="M1 7.500h7.500V15H1z" {...fill} />
            </Ico>
          </button>
          <button type="button" aria-label="Toggle filter" className="flex h-[21px] w-[11px] items-start rounded-full bg-[#464646]">
            <span className="size-[11px] rounded-full bg-[#9c9c9c]" />
          </button>
        </div>
      </div>
      <div className="flex h-[35px] shrink-0 items-center border-b border-[#404040] pl-1 text-[13px] text-[#9c9c9c]">
        <div className="mt-1 grid h-[27px] w-[154px] items-center rounded-[2px] border border-[#5e5e5e] bg-[#4f4f4f]">
          <select aria-label="Blend mode" className="col-start-1 row-start-1 h-full w-full appearance-none pl-[10px]">
            <option>Normal</option>
          </select>
          <Chevron className="pointer-events-none col-start-1 row-start-1 mr-[3px] justify-self-end text-[#767676]" />
        </div>
        <span className="ml-2 w-[57px]">Opacity:</span>
        <Percent name="Opacity" className="mt-1" />
      </div>
      <div className="flex h-[38px] shrink-0 items-center pl-2 text-[13px] text-[#9c9c9c]">
        <span className="w-11 pb-1">Lock:</span>
        <div className="flex w-[145px] items-center gap-[11px] text-[#a6a6a6]">
          <Ico size="size-4" box="0 0 16 16">
            <path d="M1 1h14v14H1z" strokeWidth="1.300" />
            <path d="M5 1h4v4H5zM12 1h3v4h-3zM1 5h4v4H1zM9 5h3v4H9zM5 9h4v3H5zM12 9h3v3h-3zM1 12h4v3H1zM9 12h3v3H9z" {...fill} />
          </Ico>
          <Ico size="size-4" box="0 0 16 16">{brush16}</Ico>
          <Ico size="size-4">{TOOLS[0][1]}</Ico>
          <Ico size="size-4" box="0 0 16 16">
            <path d="M2.500 0v2M0 3.500h10l4 4V12H2.500V3.500M2.500 13.500V16M14 13.500V16M10.500 3.500V7H14M13 0h3v3" strokeWidth="1.300" />
          </Ico>
          <Ico size="size-4" box="0 0 16 16">
            <path d="M2 7h12v8.500H2z" {...fill} />
            <path d="M4.700 7V4.500a3.300 3.300 0 0 1 6.600 0V7" strokeWidth="1.800" />
            <path d="M7.200 10h1.600v3H7.200z" fill="#535353" stroke="none" />
          </Ico>
        </div>
        <span className="w-[26px] pb-1">Fill:</span>
        <Percent name="Fill" />
      </div>
      <div className="flex min-h-0 flex-1 border-b border-[#3a3a3a] bg-[#4d4d4d]">
        <ul className="flex-1 text-[13px] text-[#f0f0f0]">
          <li className="flex h-[68px] border-b border-[#434343]">
            <button type="button" aria-label="Hide Rectangle 1" className="flex w-[38px] items-center justify-center border-r border-[#464646] bg-[#535353]">
              <Eye />
            </button>
            <div className="flex flex-1 items-center bg-[#6a6a6a] pl-[2px]">
              <div className="relative h-[62px] w-[105px] p-[2px]">
                <div className="flex h-full items-center justify-center border-2 border-[#383838] bg-[conic-gradient(#fff_25%,#dcdcdc_0_50%,#fff_0_75%,#dcdcdc_0)] bg-[length:6px_6px]">
                  <span className="h-[23px] w-[33px] bg-black" />
                </div>
                <span className="absolute top-0 left-0 h-5 w-[35px] border-t border-l border-white" />
                <span className="absolute top-0 right-0 h-5 w-[35px] border-t border-r border-white" />
                <span className="absolute bottom-0 left-0 h-5 w-[35px] border-b border-l border-white" />
                <span className="absolute right-0 bottom-0 h-5 w-[35px] border-r border-b border-white" />
                <span className="absolute right-[3px] bottom-[3px] flex size-[17px] items-center justify-center border-t border-l border-[#333] bg-[#6a6a6a] text-[#dcdcdc]">
                  <ShapeBox size="size-[14px]" />
                </span>
              </div>
              <span className="ml-[10px]">Rectangle 1</span>
            </div>
          </li>
          <li className="flex h-[70px] border-b border-[#434343] bg-[#535353]">
            <button type="button" aria-label="Hide Background" className="flex w-[38px] items-center justify-center border-r border-[#464646]">
              <Eye />
            </button>
            <div className="flex flex-1 items-center pl-1">
              <span className="h-[57px] w-[100px] border border-[#333] bg-white" />
              <span className="ml-[13px] italic">Background</span>
              <Ico size="size-4" box="0 0 16 16" className="mr-[18px] ml-auto text-[#dcdcdc]">
                <path d="M2 6.500h12v8.500H2z" />
                <path d="M4.700 6V4a3.300 3.300 0 0 1 6.600 0v2" />
                <circle cx="8" cy="10.800" r="1.500" {...fill} />
              </Ico>
            </div>
          </li>
        </ul>
        <div className="w-[20px] shrink-0 bg-[#4b4b4b]" />
      </div>
      <div className="flex h-[30px] shrink-0 items-center justify-end gap-4 pr-[33px] text-[#9c9c9c]">
        <button type="button" aria-label="Link layers">
          <LinkIcon size="w-[18px] h-3" />
        </button>
        <button type="button" aria-label="Layer style" className="w-[18px] text-[15px] leading-none italic">
          fx
        </button>
        <button type="button" aria-label="Add mask">
          <Ico size="size-[18px]" box="0 0 18 18">
            <path d="M1 3h16v12H1z" {...fill} />
            <circle cx="9" cy="9" r="3.800" fill="#4a4a4a" stroke="none" />
          </Ico>
        </button>
        <button type="button" aria-label="New adjustment layer">
          <Ico size="size-[18px]" box="0 0 16 16">{contrast}</Ico>
        </button>
        <button type="button" aria-label="New group">
          <Ico size="size-[18px]" box="0 0 18 18">
            <path d="M1 3h6l1.500 1.500H17V15H1z" {...fill} />
            <path d="M1 5.700h16" stroke="#535353" strokeWidth=".8" />
          </Ico>
        </button>
        <button type="button" aria-label="New layer">
          <Ico size="size-[16px]" box="0 0 16 16">
            <path d="M2 8.500V2h12v12H8.500zM2 8.500h6.500V14z" strokeWidth="1.400" />
          </Ico>
        </button>
        <button type="button" aria-label="Delete layer">
          <Ico size="size-[18px]" box="0 0 18 18">
            <path d="M1.500 4h15M6.500 4V1.500h5V4M3.500 4.500V16.500h11v-12M6.500 6.500v8M9 6.500v8M11.500 6.500v8" strokeWidth="1.500" />
          </Ico>
        </button>
      </div>
    </section>
  );
}

function RightPanels() {
  return (
    <aside className="flex w-[416px] shrink-0 flex-col border-r border-l-[3px] border-[#383838] bg-[#535353]">
      <div className="flex h-[15px] shrink-0 items-center justify-end border-b border-[#333] bg-[#434343] pr-2">
        <Arrows />
      </div>
      <section className="shrink-0 border-b-2 border-[#333] pb-[2px]">
        <Tabs items={[["Color", "w-[60px]"], ["Swatches", "w-[84px]"]]} />
      </section>
      <Properties />
      <Layers />
    </aside>
  );
}

export default function App() {
  return (
    <div className={`flex h-screen min-w-[1280px] flex-col overflow-hidden bg-[#535353] ${FONT}`}>
      <MenuBar />
      <OptionsBar />
      <div className="flex min-h-0 flex-1">
        <Toolbar />
        <Document />
        <Dock />
        <RightPanels />
      </div>
      <div className="flex h-[2px] shrink-0 bg-[#1c1c1c] pl-[60px]">
        <span className="w-[430px] bg-[#e8e8e8]" />
        <span className="ml-[374px] w-[62px] bg-[#4a4a4a]" />
      </div>
    </div>
  );
}
